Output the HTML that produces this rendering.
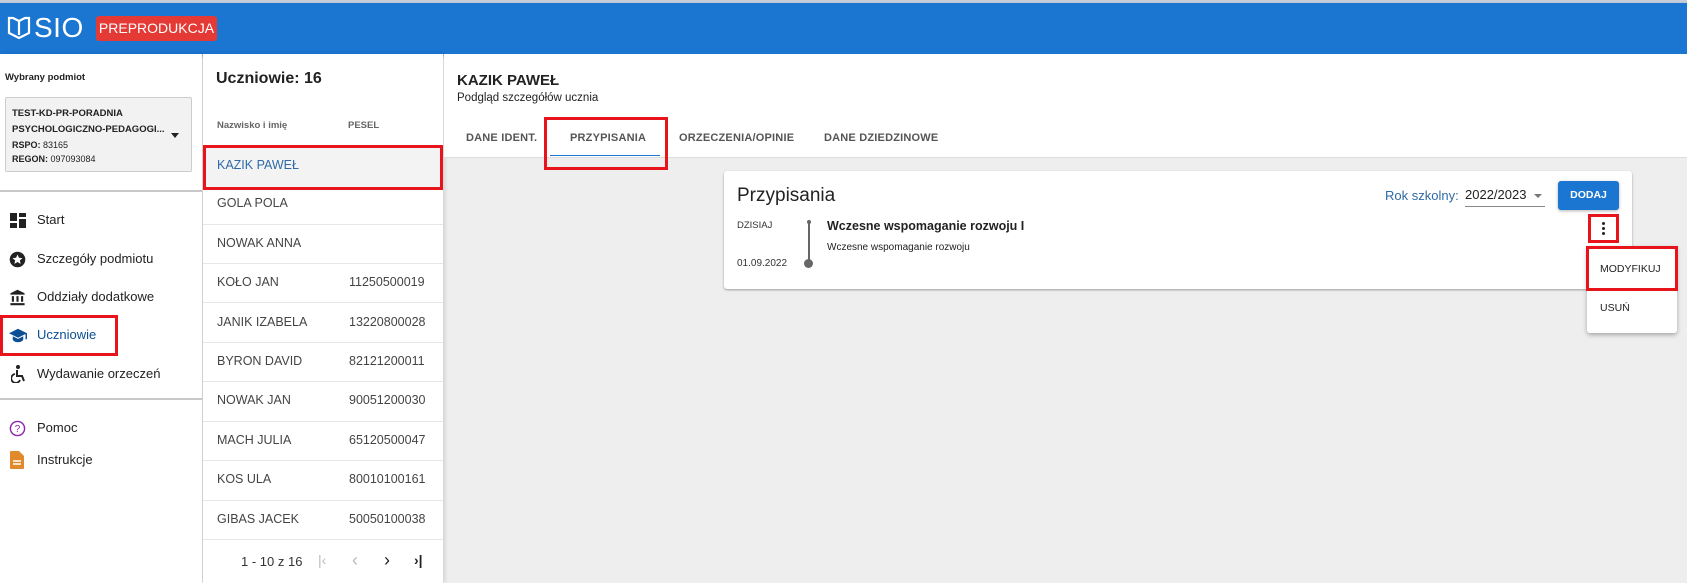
<!DOCTYPE html>
<html><head><meta charset="utf-8">
<style>
*{box-sizing:border-box;margin:0;padding:0}
body{width:1687px;height:583px;overflow:hidden;background:#eeeeee;font-family:"Liberation Sans",Arial,sans-serif;color:#222;position:relative}
.a{position:absolute}
.top{left:0;top:0;width:1687px;height:3px;background:#c6d0dc}
.bar{left:0;top:3px;width:1687px;height:51px;background:#1b76d2;box-shadow:0 2px 4px rgba(0,0,0,.35)}
.side{left:0;top:54px;width:202px;height:529px;background:#fff;box-shadow:2px 0 4px rgba(0,0,0,.15)}
.list{left:203px;top:54px;width:240px;height:529px;background:#fff;box-shadow:2px 0 4px rgba(0,0,0,.12)}
.red{border:3px solid #e8141c}
.nav{font-size:13px;color:#222;left:37px}
.row{left:203px;width:240px;height:1px;background:#e6e6e6}
.nm{left:217px;font-size:12.5px;color:#444}
.ps{left:349px;font-size:12.5px;color:#444}
.tab{font-size:11px;color:#555;font-weight:bold;letter-spacing:.2px;top:132px}
</style></head><body>
<div class="a top"></div>
<div class="a bar"></div>
<svg class="a" style="left:7px;top:15px" width="24" height="24" viewBox="0 0 24 24"><path d="M2 3h4l6 3 6-3h4v15l-10 5-10-5z" fill="none" stroke="#fff" stroke-width="2.2"/><path d="M12 6v14" stroke="#fff" stroke-width="2.2"/></svg>
<div class="a" style="left:34px;top:12px;font-size:28px;color:#fff;letter-spacing:.5px">SIO</div>
<div class="a" style="left:96px;top:16px;width:121px;height:25px;background:#e53935;border-radius:3px;color:#fff;font-size:14px;line-height:25px;text-align:center;white-space:nowrap">PREPRODUKCJA</div>

<div class="a side"></div>
<div class="a" style="left:5px;top:72px;font-size:9.5px;font-weight:bold">Wybrany podmiot</div>
<div class="a" style="left:5px;top:97px;width:187px;height:75px;background:#f2f2f2;border:1px solid #ccc;border-radius:2px"></div>
<div class="a" style="left:12px;top:106px;font-size:9.5px;font-weight:bold;line-height:16px">TEST-KD-PR-PORADNIA<br>PSYCHOLOGICZNO-PEDAGOGI...</div>
<div class="a" style="left:12px;top:139px;font-size:9px;line-height:13.5px"><b>RSPO:</b> 83165<br><b>REGON:</b> 097093084</div>
<div class="a" style="left:171px;top:133px;width:0;height:0;border-left:4px solid transparent;border-right:4px solid transparent;border-top:5px solid #222"></div>
<div class="a" style="left:0;top:190px;width:202px;height:2px;background:#c8c8c8"></div>
<div class="a" style="left:0;top:398px;width:202px;height:2px;background:#c8c8c8"></div>

<svg class="a" style="left:10px;top:213px" width="16" height="15" viewBox="0 0 16 15"><rect x="0" y="0" width="7" height="8" fill="#222"/><rect x="9" y="0" width="7" height="4" fill="#222"/><rect x="0" y="10" width="7" height="5" fill="#222"/><rect x="9" y="6" width="7" height="9" fill="#222"/></svg>
<div class="a nav" style="top:212px">Start</div>
<svg class="a" style="left:9px;top:251px" width="17" height="17" viewBox="0 0 24 24"><circle cx="12" cy="12" r="11" fill="#222"/><path d="M12 5l2 4.5 5 .5-3.7 3.3 1.1 4.9L12 15.6 7.6 18.2l1.1-4.9L5 10l5-.5z" fill="#fff"/></svg>
<div class="a nav" style="top:251px">Szczegóły podmiotu</div>
<svg class="a" style="left:9px;top:289px" width="17" height="17" viewBox="0 0 24 24"><path d="M12 1L2 6v2h20V6z M4 10h3v8H4z M10.5 10h3v8h-3z M17 10h3v8h-3z M2 20h20v3H2z" fill="#222"/></svg>
<div class="a nav" style="top:289px">Oddziały dodatkowe</div>
<div class="a red" style="left:0;top:315px;width:118px;height:41px"></div>
<svg class="a" style="left:9px;top:328px" width="18" height="15" viewBox="0 0 24 20"><path d="M12 1L0 7l12 6 10-5v7h2V7z M5 11v4c0 2 3.5 4 7 4s7-2 7-4v-4l-7 3.5z" fill="#0d4f94"/></svg>
<div class="a nav" style="top:327px;color:#0d4f94">Uczniowie</div>
<svg class="a" style="left:11px;top:365px" width="14" height="18" viewBox="0 0 14 18"><circle cx="7" cy="2" r="2" fill="#222"/><path d="M6 5v6h5l2 5" fill="none" stroke="#222" stroke-width="2"/><path d="M4 9a4.5 4.5 0 1 0 5 6" fill="none" stroke="#222" stroke-width="1.8"/></svg>
<div class="a nav" style="top:366px">Wydawanie orzeczeń</div>
<svg class="a" style="left:9px;top:420px" width="17" height="17" viewBox="0 0 24 24"><circle cx="12" cy="12" r="10" fill="none" stroke="#8e24aa" stroke-width="2"/><text x="12" y="17" text-anchor="middle" font-size="14" font-family="Liberation Sans" fill="#8e24aa">?</text></svg>
<div class="a nav" style="top:420px">Pomoc</div>
<svg class="a" style="left:10px;top:451px" width="14" height="18" viewBox="0 0 14 18"><path d="M0 1a1 1 0 0 1 1-1h8l5 5v12a1 1 0 0 1-1 1H1a1 1 0 0 1-1-1z" fill="#e08a2c"/><path d="M3 10h8M3 13h8" stroke="#fff" stroke-width="1.4"/></svg>
<div class="a nav" style="top:452px">Instrukcje</div>

<div class="a list"></div>
<div class="a" style="left:216px;top:70px;font-size:16px;font-weight:bold;color:#222">Uczniowie: 16</div>
<div class="a" style="left:217px;top:120px;font-size:9.5px;font-weight:bold;color:#666">Nazwisko i imię</div>
<div class="a" style="left:348px;top:120px;font-size:9.5px;font-weight:bold;color:#666">PESEL</div>
<div class="a" style="left:203px;top:146px;width:240px;height:42px;background:#f3f3f3"></div>
<div class="a red" style="left:203px;top:145px;width:240px;height:45px"></div>
<div class="a nm" style="top:158px;color:#2f6aa6">KAZIK PAWEŁ</div>
<div class="a row" style="top:224px"></div><div class="a row" style="top:263px"></div><div class="a row" style="top:302px"></div><div class="a row" style="top:342px"></div><div class="a row" style="top:381px"></div><div class="a row" style="top:421px"></div><div class="a row" style="top:460px"></div><div class="a row" style="top:500px"></div><div class="a row" style="top:539px"></div>
<div class="a nm" style="top:196px">GOLA POLA</div>
<div class="a nm" style="top:236px">NOWAK ANNA</div>
<div class="a nm" style="top:275px">KOŁO JAN</div><div class="a ps" style="top:275px">11250500019</div>
<div class="a nm" style="top:315px">JANIK IZABELA</div><div class="a ps" style="top:315px">13220800028</div>
<div class="a nm" style="top:354px">BYRON DAVID</div><div class="a ps" style="top:354px">82121200011</div>
<div class="a nm" style="top:393px">NOWAK JAN</div><div class="a ps" style="top:393px">90051200030</div>
<div class="a nm" style="top:433px">MACH JULIA</div><div class="a ps" style="top:433px">65120500047</div>
<div class="a nm" style="top:472px">KOS ULA</div><div class="a ps" style="top:472px">80010100161</div>
<div class="a nm" style="top:512px">GIBAS JACEK</div><div class="a ps" style="top:512px">50050100038</div>
<div class="a" style="left:241px;top:554px;font-size:13px;color:#333">1 - 10 z 16</div>
<div class="a" style="left:318px;top:552px;font-size:14px;color:#bbb">|&lsaquo;</div>
<div class="a" style="left:352px;top:550px;font-size:18px;color:#bbb">&lsaquo;</div>
<div class="a" style="left:384px;top:550px;font-size:18px;color:#222">&rsaquo;</div>
<div class="a" style="left:414px;top:552px;font-size:14px;color:#222;font-weight:bold">&rsaquo;|</div>

<div class="a" style="left:444px;top:54px;width:1243px;height:104px;background:#fff;border-bottom:1px solid #ddd"></div>
<div class="a" style="left:457px;top:72px;font-size:15px;font-weight:bold;color:#222">KAZIK PAWEŁ</div>
<div class="a" style="left:457px;top:92px;font-size:11.5px;color:#222">Podgląd szczegółów ucznia</div>
<div class="a tab" style="left:466px">DANE IDENT.</div>
<div class="a tab" style="left:570px">PRZYPISANIA</div>
<div class="a tab" style="left:679px">ORZECZENIA/OPINIE</div>
<div class="a tab" style="left:824px">DANE DZIEDZINOWE</div>
<div class="a" style="left:550px;top:155px;width:110px;height:1px;background:#1b76d2"></div>
<div class="a red" style="left:544px;top:117px;width:124px;height:53px"></div>

<div class="a" style="left:724px;top:171px;width:908px;height:118px;background:#fff;border-radius:3px;box-shadow:0 1px 2px rgba(0,0,0,.35)"></div>
<div class="a" style="left:737px;top:185px;font-size:19px;color:#222">Przypisania</div>
<div class="a" style="left:737px;top:220px;font-size:9.5px;color:#333">DZISIAJ</div>
<div class="a" style="left:737px;top:258px;font-size:10px;color:#333">01.09.2022</div>
<div class="a" style="left:807px;top:220px;width:4px;height:4px;border-radius:50%;background:#666"></div>
<div class="a" style="left:808px;top:222px;width:2px;height:42px;background:#666"></div>
<div class="a" style="left:804px;top:259px;width:9px;height:9px;border-radius:50%;background:#666"></div>
<div class="a" style="left:827px;top:219px;font-size:12.5px;font-weight:bold;color:#222">Wczesne wspomaganie rozwoju I</div>
<div class="a" style="left:827px;top:242px;font-size:10px;color:#222">Wczesne wspomaganie rozwoju</div>

<div class="a" style="left:1385px;top:188px;font-size:13px;color:#2f6aa6">Rok szkolny:</div>
<div class="a" style="left:1465px;top:187px;font-size:13px;color:#222">2022/2023</div>
<div class="a" style="left:1534px;top:194px;width:0;height:0;border-left:4px solid transparent;border-right:4px solid transparent;border-top:4px solid #777"></div>
<div class="a" style="left:1465px;top:206px;width:80px;height:1px;background:#888"></div>
<div class="a" style="left:1558px;top:181px;width:61px;height:29px;background:#1b76d2;border-radius:3px;box-shadow:0 1px 3px rgba(0,0,0,.3);color:#fff;font-size:10.5px;font-weight:bold;line-height:29px;text-align:center">DODAJ</div>
<div class="a red" style="left:1588px;top:214px;width:31px;height:29px"></div>
<div class="a" style="left:1602px;top:222px;width:3px;height:3px;border-radius:50%;background:#222;box-shadow:0 5px 0 #222,0 10px 0 #222"></div>
<div class="a" style="left:1587px;top:246px;width:90px;height:87px;background:#fff;border-radius:3px;box-shadow:0 2px 5px rgba(0,0,0,.3)"></div>
<div class="a red" style="left:1586px;top:246px;width:92px;height:45px"></div>
<div class="a" style="left:1600px;top:263px;font-size:10.5px;color:#222">MODYFIKUJ</div>
<div class="a" style="left:1600px;top:302px;font-size:10.5px;color:#222">USUŃ</div>
</body></html>
